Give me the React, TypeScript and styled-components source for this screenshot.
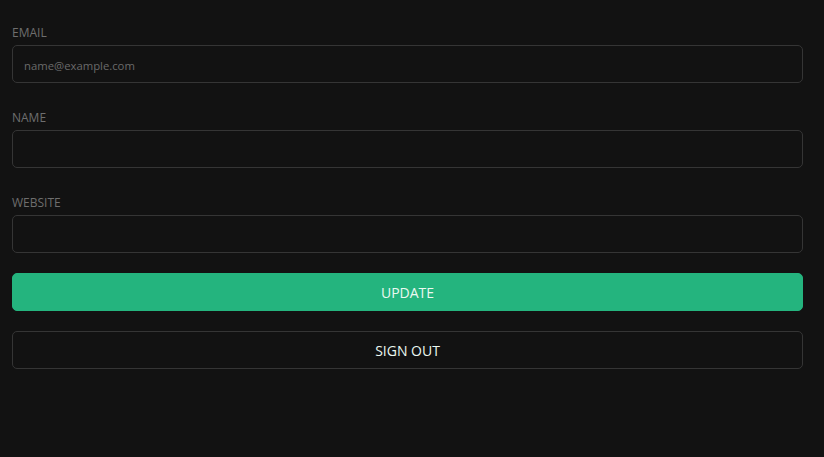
import React from "react";
import styled, { createGlobalStyle } from "styled-components";

const Global = createGlobalStyle`
  html, body { margin: 0; padding: 0; background: #121212; }
  body { font-family: "Open Sans", "Noto Sans", sans-serif; }
  * { box-sizing: border-box; }
`;

const Page = styled.div`
  min-height: 457px;
  background: #121212;
  padding: 25px 21px 0 12px;
  display: flex;
  flex-direction: column;
`;

const Field = styled.div`
  display: flex;
  flex-direction: column;
  margin-bottom: 27px;
  &:last-of-type { margin-bottom: 20px; }
`;

const Label = styled.label`
  font-size: 12px;
  line-height: 16px;
  color: #6e6e6e;
  text-transform: uppercase;
  margin-bottom: 4px;
`;

const Input = styled.input`
  height: 38px;
  width: 100%;
  background: #121212;
  border: 1px solid #353535;
  border-radius: 5px;
  padding: 2px 11px 0;
  font-family: inherit;
  font-size: 11.3px;
  color: #d0d0d0;
  outline: none;
  &::placeholder { color: #6a6a6a; }
`;

const Button = styled.button<{ $primary?: boolean }>`
  height: 38px;
  width: 100%;
  border-radius: 5px;
  font-family: inherit;
  font-size: 14px;
  text-transform: uppercase;
  cursor: pointer;
  color: #ecf8f1;
  background: ${(p) => (p.$primary ? "#24b47e" : "transparent")};
  border: 1px solid ${(p) => (p.$primary ? "#24b47e" : "#353535")};
  margin-bottom: 20px;
`;

export default function App() {
  return (
    <>
      <Global />
      <Page>
        <Field>
          <Label>Email</Label>
          <Input placeholder="name@example.com" />
        </Field>
        <Field>
          <Label>Name</Label>
          <Input />
        </Field>
        <Field>
          <Label>Website</Label>
          <Input />
        </Field>
        <Button $primary>Update</Button>
        <Button>Sign Out</Button>
      </Page>
    </>
  );
}
